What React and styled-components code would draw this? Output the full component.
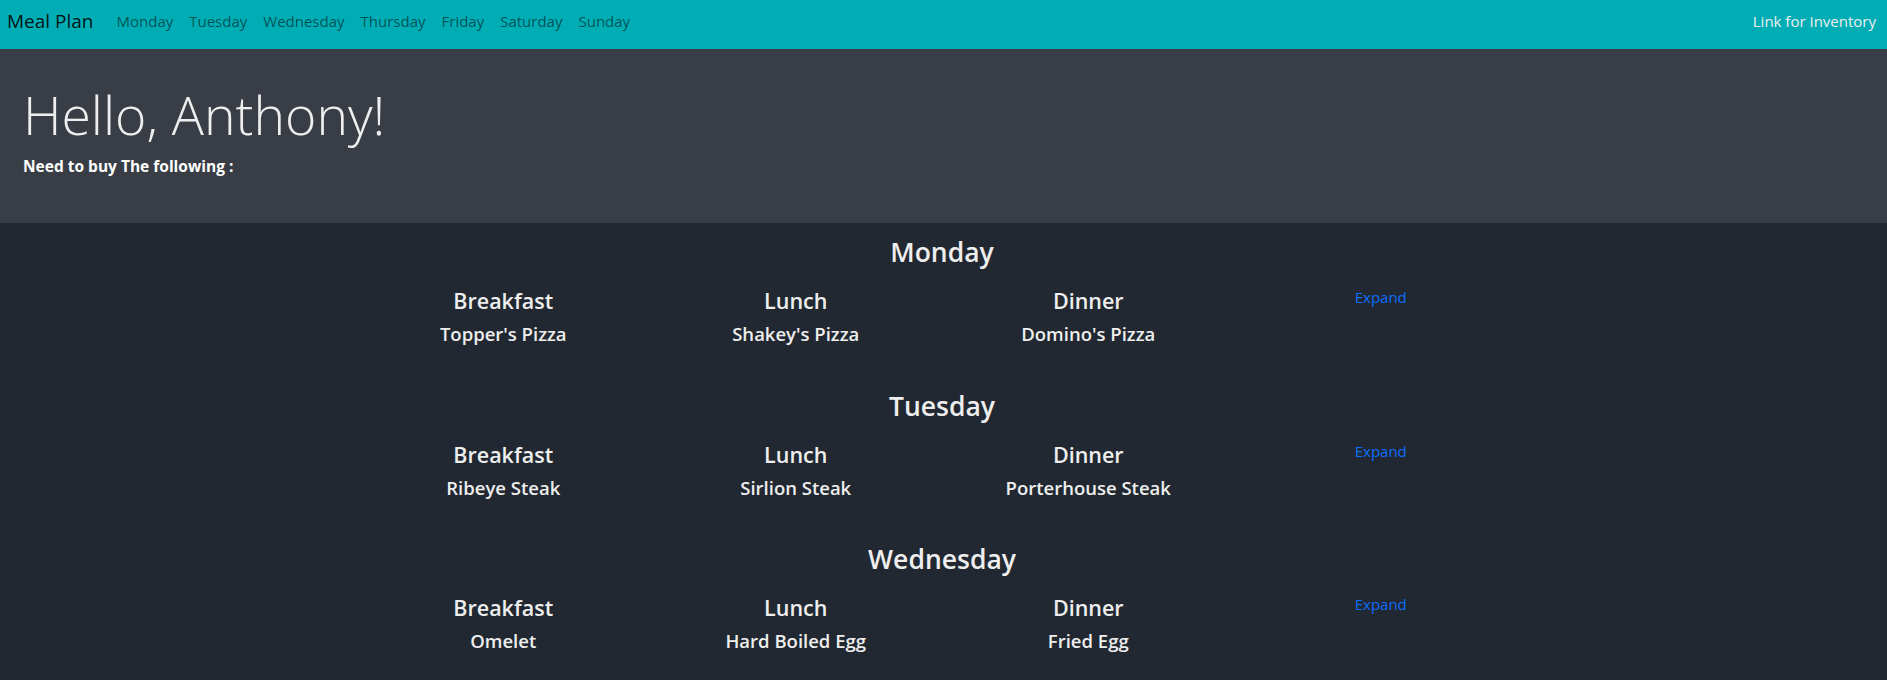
import React from "react";
import styled, { createGlobalStyle } from "styled-components";

const GlobalStyle = createGlobalStyle`
  html, body { margin: 0; padding: 0; }
  body {
    background: #222831;
    color: #eeeeee;
    font-family: "Open Sans", "Noto Sans", sans-serif;
  }
  * { box-sizing: border-box; }
`;

const Navbar = styled.nav`
  height: 49px;
  background: #00adb5;
  display: flex;
  align-items: center;
  padding: 0 11px 7px 7px;
`;

const Brand = styled.a`
  font-size: 19px;
  color: rgba(0, 0, 0, 0.9);
  text-decoration: none;
  margin-right: 15px;
  white-space: nowrap;
`;

const NavList = styled.div`
  display: flex;
  align-items: center;
`;

const NavLink = styled.a`
  font-size: 15px;
  color: rgba(0, 0, 0, 0.55);
  text-decoration: none;
  padding: 0 8px;
  white-space: nowrap;
`;

const InventoryLink = styled.a`
  margin-left: auto;
  font-size: 15px;
  color: #eeeeee;
  text-decoration: none;
  white-space: nowrap;
`;

const Jumbotron = styled.header`
  background: #393e46;
  padding: 34px 23px 0;
  height: 174px;
`;

const Greeting = styled.h1`
  margin: 0 0 7px;
  font-size: 53.5px;
  font-weight: 300;
  line-height: 1.2;
  color: #eeeeee;
`;

const Subtitle = styled.p`
  margin: 0;
  font-size: 15.5px;
  font-weight: 700;
  line-height: 24px;
  color: #ffffff;
`;

const Main = styled.main`
  padding: 12px 3px 0 0;
`;

const Container = styled.div`
  width: 1170px;
  margin: 0 auto;
`;

const DaySection = styled.section`
  margin-bottom: 43.5px;
`;

const DayTitle = styled.h3`
  margin: 0;
  text-align: center;
  font-size: 26.5px;
  font-weight: 600;
  line-height: 34px;
  color: #eeeeee;
`;

const MealRow = styled.div`
  display: grid;
  grid-template-columns: repeat(4, 1fr);
  margin-top: 17px;
`;

const MealCol = styled.div`
  display: flex;
  flex-direction: column;
  align-items: center;
  text-align: center;
`;

const MealLabel = styled.h4`
  margin: 0;
  font-size: 21.5px;
  font-weight: 600;
  line-height: 29px;
  color: #eeeeee;
`;

const MealName = styled.h5`
  margin: 8px 0 0;
  font-size: 18.5px;
  font-weight: 600;
  line-height: 22px;
  color: #eeeeee;
`;

const ExpandLink = styled.a`
  font-size: 15px;
  line-height: 24px;
  margin-top: -1px;
  color: #0d6efd;
  text-decoration: none;
  cursor: pointer;
`;

const days = ["Monday", "Tuesday", "Wednesday", "Thursday", "Friday", "Saturday", "Sunday"];

const plan = [
  { day: "Monday", meals: ["Topper's Pizza", "Shakey's Pizza", "Domino's Pizza"] },
  { day: "Tuesday", meals: ["Ribeye Steak", "Sirlion Steak", "Porterhouse Steak"] },
  { day: "Wednesday", meals: ["Omelet", "Hard Boiled Egg", "Fried Egg"] },
];

const labels = ["Breakfast", "Lunch", "Dinner"];

export default function App() {
  return (
    <>
      <GlobalStyle />
      <Navbar>
        <Brand href="#">Meal Plan</Brand>
        <NavList>
          {days.map((d) => (
            <NavLink key={d} href="#">{d}</NavLink>
          ))}
        </NavList>
        <InventoryLink href="#">Link for Inventory</InventoryLink>
      </Navbar>
      <Jumbotron>
        <Greeting>Hello, Anthony!</Greeting>
        <Subtitle>Need to buy The following :</Subtitle>
      </Jumbotron>
      <Main>
        <Container>
          {plan.map((p) => (
            <DaySection key={p.day}>
              <DayTitle>{p.day}</DayTitle>
              <MealRow>
                {labels.map((l, i) => (
                  <MealCol key={l}>
                    <MealLabel>{l}</MealLabel>
                    <MealName>{p.meals[i]}</MealName>
                  </MealCol>
                ))}
                <MealCol>
                  <ExpandLink>Expand</ExpandLink>
                </MealCol>
              </MealRow>
            </DaySection>
          ))}
        </Container>
      </Main>
    </>
  );
}
